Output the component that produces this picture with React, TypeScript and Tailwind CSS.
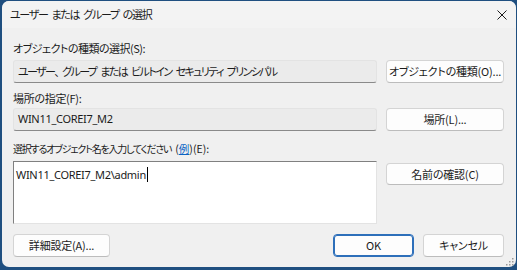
const jp = "font-['Noto_Sans_CJK_JP','Noto_Sans',sans-serif] [font-feature-settings:'palt']";
const latin = "font-['Noto_Sans','Noto_Sans_CJK_JP',sans-serif] tracking-[-0.3px]";

// Japanese UI text with condensed glyphs but visible word gaps
function Words({ text, className = '' }: { text: string; className?: string }) {
  const words = text.split(' ');
  return (
    <span className={`inline-flex gap-[4px] whitespace-nowrap ${className}`}>
      {words.map((w, i) => (
        <span key={i}>{w}</span>
      ))}
    </span>
  );
}

function Button({ label, className = '', primary = false }: { label: string; className?: string; primary?: boolean }) {
  return (
    <button
      className={`flex items-center justify-center whitespace-nowrap rounded-[4px] bg-[#fdfdfd] text-[11px] tracking-[-0.2px] text-[#1b1b1b] ${
        primary ? 'border border-[#2d6fba] shadow-[inset_0_0_0_1px_#2d6fba]' : 'border border-[#d4d4d4] border-b-[#bcbcbc]'
      } ${className}`}
    >
      {label}
    </button>
  );
}

function ReadonlyField({ children }: { children: React.ReactNode }) {
  return (
    <div className="flex h-[23px] flex-1 items-center whitespace-nowrap rounded-[3px] border border-[#e3e3e3] border-b-[#8a8a8a] bg-[#ebebeb] px-[4px] text-[11px] text-[#1b1b1b]">
      {children}
    </div>
  );
}

export default function App() {
  return (
    <div className={`h-[270px] w-[517px] bg-[#1f4f80] pl-[2px] pr-[1px] pt-[1px] pb-[3px] ${jp}`}>
      <div className="flex h-full flex-col rounded-[7px] bg-[#f0f0f0]">
        {/* Title bar */}
        <div className="flex h-[27px] items-center justify-between rounded-t-[7px] bg-[#f3f3f3] pl-[8px] pr-[9px]">
          <Words text="ユーザー または グループ の選択" className="text-[11px] tracking-[-1.3px] text-[#1b1b1b]" />
          <svg width="10" height="10" viewBox="0 0 10 10" className="text-[#1b1b1b]">
            <path d="M0.5 0.5 L9.5 9.5 M9.5 0.5 L0.5 9.5" stroke="currentColor" strokeWidth="1" />
          </svg>
        </div>

        <div className="flex flex-1 flex-col pl-[11px] pr-[12px] text-[11px] text-[#1b1b1b]">
          {/* Object types */}
          <div className="mt-[12px] h-[17px] leading-[17px] tracking-[-0.5px]">オブジェクトの種類の選択(S):</div>
          <div className="mt-[3px] flex gap-[9px]">
            <ReadonlyField>
              <Words text="ユーザー、 グループ または ビルトイン セキュリティ プリンシパル" className="tracking-[-1.6px]" />
            </ReadonlyField>
            <Button label="オブジェクトの種類(O)..." className="h-[23px] w-[118px]" />
          </div>

          {/* Location */}
          <div className="mt-[7px] h-[17px] leading-[17px] tracking-[-0.3px]">場所の指定(F):</div>
          <div className="mt-[1px] flex gap-[9px]">
            <ReadonlyField>
              <span className={latin}>WIN11_COREI7_M2</span>
            </ReadonlyField>
            <Button label="場所(L)..." className="h-[23px] w-[118px]" />
          </div>

          {/* Object names */}
          <div className="mt-[9px] flex h-[17px] items-center gap-[4px] whitespace-nowrap leading-[17px]">
            <span className="text-[10px] tracking-[-1.2px]">選択するオブジェクト名を入力してください</span>
            <span className="text-[10.5px] tracking-[0px]">
              (<span className="text-[#0b63c4] underline">例</span>)(E):
            </span>
          </div>
          <div className="mt-[4px] flex gap-[9px]">
            <div className="h-[63px] flex-1 border border-[#808080] border-b-[#e3e3e3] border-r-[#e3e3e3] bg-white px-[2px] pt-[4px]">
              <div className={`flex items-center text-[11px] leading-[17px] ${latin}`}>
                WIN11_COREI7_M2\admin
                <span className="ml-[1px] inline-block h-[15px] w-[1px] bg-black" />
              </div>
            </div>
            <div className="w-[118px]">
              <Button label="名前の確認(C)" className="mt-[2px] h-[22px] w-[118px]" />
            </div>
          </div>

          {/* Footer */}
          <div className="mt-[10px] flex items-center">
            <Button label="詳細設定(A)..." className="h-[23px] w-[97px]" />
            <div className="flex-1" />
            <Button label="OK" primary className="h-[23px] w-[81px]" />
            <Button label="キャンセル" className="ml-[9px] h-[23px] w-[81px]" />
          </div>

          <div className="flex flex-1 items-end justify-end pb-[1px]">
            <svg width="9" height="9" viewBox="0 0 9 9" className="-mr-[10px]">
              <rect x="7" y="1" width="1.5" height="1.5" fill="#9a9a9a" />
              <rect x="4" y="4" width="1.5" height="1.5" fill="#9a9a9a" />
              <rect x="7" y="4" width="1.5" height="1.5" fill="#9a9a9a" />
              <rect x="1" y="7" width="1.5" height="1.5" fill="#9a9a9a" />
              <rect x="4" y="7" width="1.5" height="1.5" fill="#9a9a9a" />
              <rect x="7" y="7" width="1.5" height="1.5" fill="#9a9a9a" />
            </svg>
          </div>
        </div>
      </div>
    </div>
  );
}
